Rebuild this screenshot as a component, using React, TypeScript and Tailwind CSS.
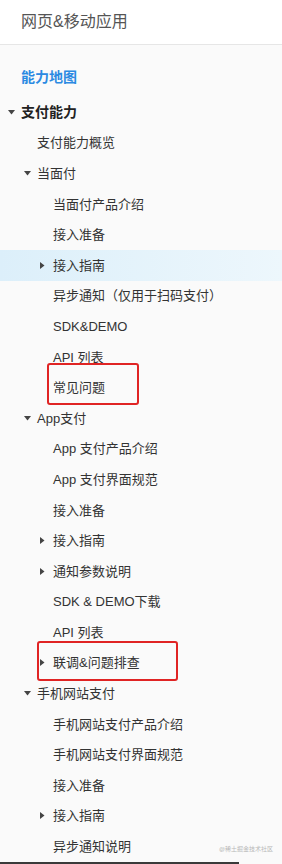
import React from "react";

type Item = { label: string; level: number; arrow?: "down" | "right"; bold?: boolean; active?: boolean };

const items: Item[] = [
  { label: "支付能力", level: 1, arrow: "down", bold: true },
  { label: "支付能力概览", level: 2 },
  { label: "当面付", level: 2, arrow: "down" },
  { label: "当面付产品介绍", level: 3 },
  { label: "接入准备", level: 3 },
  { label: "接入指南", level: 3, arrow: "right", active: true },
  { label: "异步通知（仅用于扫码支付）", level: 3 },
  { label: "SDK&DEMO", level: 3 },
  { label: "API 列表", level: 3 },
  { label: "常见问题", level: 3 },
  { label: "App支付", level: 2, arrow: "down" },
  { label: "App 支付产品介绍", level: 3 },
  { label: "App 支付界面规范", level: 3 },
  { label: "接入准备", level: 3 },
  { label: "接入指南", level: 3, arrow: "right" },
  { label: "通知参数说明", level: 3, arrow: "right" },
  { label: "SDK & DEMO下载", level: 3 },
  { label: "API 列表", level: 3 },
  { label: "联调&问题排查", level: 3, arrow: "right" },
  { label: "手机网站支付", level: 2, arrow: "down" },
  { label: "手机网站支付产品介绍", level: 3 },
  { label: "手机网站支付界面规范", level: 3 },
  { label: "接入准备", level: 3 },
  { label: "接入指南", level: 3, arrow: "right" },
  { label: "异步通知说明", level: 3 },
];

function Arrow({ dir }: { dir: "down" | "right" }) {
  if (dir === "down")
    return (
      <svg width="7" height="5" viewBox="0 0 7 5">
        <polygon points="0,0 7,0 3.5,4.5" fill="#444" />
      </svg>
    );
  return (
    <svg width="5" height="7" viewBox="0 0 5 7">
      <polygon points="0,0 4.5,3.5 0,7" fill="#444" />
    </svg>
  );
}

const padClass: Record<number, string> = {
  1: "pl-[8px]",
  2: "pl-[24px]",
  3: "pl-[40px]",
};

export default function App() {
  return (
    <div
      className="relative w-[282px] h-[864px] overflow-hidden bg-[#fafafa]"
      style={{ fontFamily: '"Liberation Sans", "Noto Sans CJK SC", sans-serif' }}
    >
      <div className="h-[45px] bg-white border-b border-[#e6e6e6] flex items-center pl-[21px] text-[16px] text-[#555] leading-none">
        网页&amp;移动应用
      </div>
      <div className="pt-[17px]">
        <div className="h-[30px] flex items-center pl-[21px] text-[14px] font-bold text-[#2b8ae2] leading-none">
          能力地图
        </div>
        <div className="mt-[5px]">
          {items.map((it, i) => (
            <div
              key={i}
              className={`h-[30.6px] flex items-center leading-none ${padClass[it.level]} ${
                it.active ? "bg-gradient-to-r from-[#dceffa] to-[#edf7fc]" : ""
              }`}
            >
              <div className="w-[13px] flex items-center">
                {it.arrow ? <Arrow dir={it.arrow} /> : null}
              </div>
              <span
                className={
                  it.bold
                    ? "text-[14px] font-bold text-[#222]"
                    : "text-[13px] text-[#333]"
                }
              >
                {it.label}
              </span>
            </div>
          ))}
        </div>
      </div>

      <div className="absolute left-[47px] top-[363px] w-[92px] h-[42px] border-[2.5px] border-[#e02424] rounded-[3px]" />
      <div className="absolute left-[37px] top-[641px] w-[141px] h-[40px] border-[2.5px] border-[#e02424] rounded-[3px]" />

      <div className="absolute right-[9px] top-[846px] text-[6px] text-[#b8b8b8] leading-none whitespace-nowrap">
        @稀土掘金技术社区
      </div>
      <div className="absolute left-0 bottom-0 w-[239px] h-[2px] bg-[#3a3a3a]" />
    </div>
  );
}
